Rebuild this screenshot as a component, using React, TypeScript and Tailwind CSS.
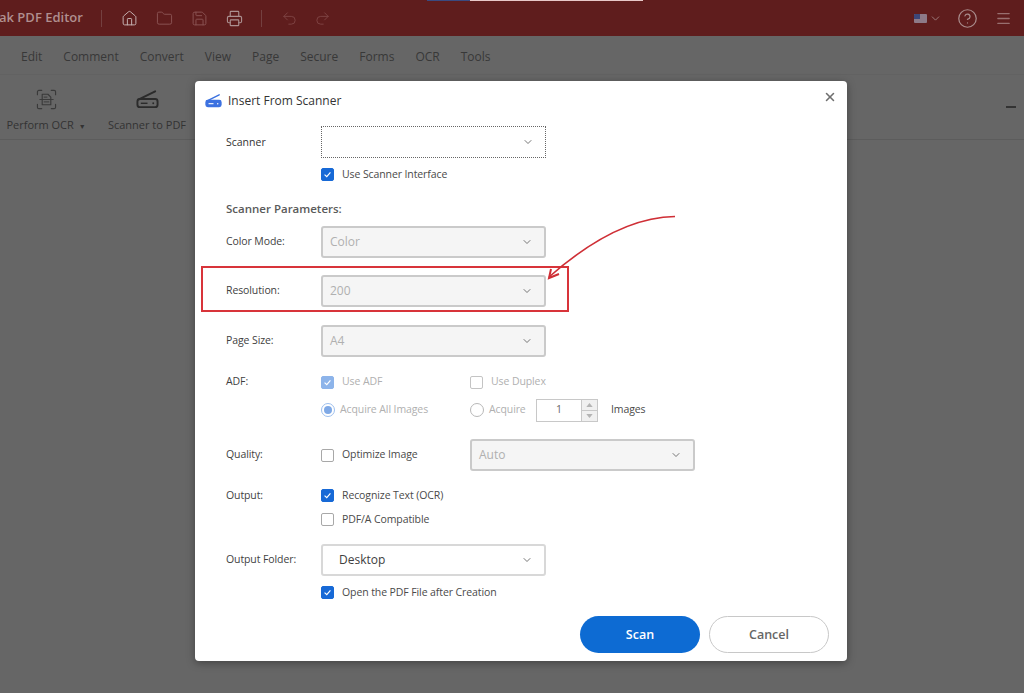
import { ChevronDown, CircleHelp, Folder, Home, Menu, Printer, Redo2, Save, Undo2, X } from 'lucide-react'
import type { ReactNode } from 'react'

const menus = ['Edit', 'Comment', 'Convert', 'View', 'Page', 'Secure', 'Forms', 'OCR', 'Tools']

function ScannerIcon({ color, className }: { color: string; className: string }) {
  return (
    <svg viewBox="0 0 24 20" className={className} fill="none">
      <path d="M3 10.5 L20 2" stroke={color} strokeWidth="2" strokeLinecap="round" />
      <rect x="1.5" y="10" width="21" height="8.5" rx="2.5" stroke={color} strokeWidth="2" fill={color === '#3b71e0' ? color : 'none'} />
      <path d="M5 14.5h7" stroke={color === '#3b71e0' ? '#fff' : color} strokeWidth="1.5" />
      <circle cx="18" cy="14.5" r="1" fill={color === '#3b71e0' ? '#fff' : color} />
    </svg>
  )
}

function OcrIcon() {
  return (
    <svg viewBox="0 0 22 22" className="w-[21px] h-[21px]" fill="none" stroke="#3a3a3a" strokeWidth="1.2" strokeLinecap="round">
      <path d="M1.5 6V3a1.5 1.5 0 0 1 1.5-1.5h3M16 1.5h3A1.5 1.5 0 0 1 20.500 3v3M20.500 16v3a1.500 1.500 0 0 1-1.500 1.500h-3M6 20.500H3A1.500 1.500 0 0 1 1.500 19v-3" />
      <path d="M6.500 5.500h6l3 3v8h-9z" strokeLinejoin="round" />
      <path d="M4 11h14M8.500 8.500h3M8.500 13.500h5" strokeWidth="1" />
    </svg>
  )
}

function Check({ state, children }: { state: 'on' | 'off' | 'on-dim' | 'off-dim'; children: ReactNode }) {
  const box =
    state === 'on'
      ? 'bg-[#1769d6] border-[#1769d6]'
      : state === 'on-dim'
        ? 'bg-[#8db4ea] border-[#8db4ea]'
        : state === 'off'
          ? 'bg-white border-[#a8a8a8]'
          : 'bg-white border-[#c4c4c4]'
  const dim = state === 'on-dim' || state === 'off-dim'
  return (
    <div className="flex items-center">
      <span className={`w-[13px] h-[13px] rounded-[2px] border flex items-center justify-center ${box}`}>
        {(state === 'on' || state === 'on-dim') && (
          <svg viewBox="0 0 12 12" className="w-[11px] h-[11px]" fill="none">
            <path d="M2.8 6.200 5.200 8.400 9.200 3.800" stroke="#fff" strokeWidth="1.3" />
          </svg>
        )}
      </span>
      <span className={`ml-[8px] text-[10.5px] tracking-[-0.1px] ${dim ? 'text-[#b0b0b0]' : 'text-[#4a4a4a]'}`}>{children}</span>
    </div>
  )
}

function Select({ value, width = 'w-[225px]', kind = 'disabled' }: { value?: string; width?: string; kind?: 'disabled' | 'normal' | 'focus' }) {
  const look =
    kind === 'disabled'
      ? 'bg-[#f5f5f5] border-[#cacaca] border-2 rounded-[3px] text-[#b0b0b0] pl-[7px]'
      : kind === 'normal'
        ? 'bg-white border-[#d8d8d8] border-2 rounded-[3px] text-[#404040] pl-[16px]'
        : 'bg-white border border-dotted border-[#666] text-[#404040] pl-[8px]'
  return (
    <div className={`${width} h-[32px] flex items-center justify-between pr-[11px] text-[12px] ${look}`}>
      <span>{value}</span>
      <ChevronDown className="w-[12px] h-[12px] text-[#666]" strokeWidth={1.8} />
    </div>
  )
}

function Label({ children }: { children: ReactNode }) {
  return <span className="w-[95px] shrink-0 text-[10.5px] tracking-[-0.1px] text-[#3f3f3f]">{children}</span>
}

export default function App() {
  return (
    <div className="relative w-[1024px] h-[693px] overflow-hidden bg-[#666666] font-['Open_Sans','Noto_Sans',sans-serif]">
      {/* top strip of the screen recording */}
      <div className="absolute top-0 left-[427px] h-px w-[43px] bg-[#3a4a80]" />
      <div className="absolute top-0 left-[470px] h-px w-[173px] bg-[#e8c8c8]" />

      {/* title bar */}
      <div className="h-[36px] bg-[#5f1d1d] flex items-center">
        <span className="ml-[-1px] w-[85px] text-[13px] font-semibold text-[#b08f8f] whitespace-nowrap">ak PDF Editor</span>
        <span className="ml-[17px] w-px h-[17px] bg-[#744040]" />
        <Home className="ml-[19px] w-[17px] h-[17px] text-[#c4b0b0]" strokeWidth={1.4} />
        <Folder className="ml-[18px] w-[17px] h-[17px] text-[#8a5252]" strokeWidth={1.4} />
        <Save className="ml-[18px] w-[17px] h-[17px] text-[#8a5252]" strokeWidth={1.4} />
        <Printer className="ml-[18px] w-[17px] h-[17px] text-[#ab9090]" strokeWidth={1.6} />
        <span className="ml-[18px] w-px h-[17px] bg-[#744040]" />
        <Undo2 className="ml-[19px] w-[17px] h-[17px] text-[#7d4242]" strokeWidth={1.4} />
        <Redo2 className="ml-[16px] w-[17px] h-[17px] text-[#7d4242]" strokeWidth={1.4} />
        <div className="ml-auto flex items-center mr-[12px]">
          <span className="w-[13px] h-[9px] bg-[#8d7a88] rounded-[1px] overflow-hidden">
            <span className="block w-[6px] h-[5px] bg-[#3c4678]" />
          </span>
          <ChevronDown className="ml-[2px] w-[13px] h-[13px] text-[#a98c8c]" strokeWidth={1.5} />
          <CircleHelp className="ml-[15px] w-[21px] h-[21px] text-[#a98c8c]" strokeWidth={1.4} />
          <Menu className="ml-[17px] w-[17px] h-[17px] text-[#986f6f]" strokeWidth={1.8} />
        </div>
      </div>

      {/* menu row */}
      <div className="h-[39px] pt-[3px] pl-[21px] flex items-center gap-[21px] border-b border-[#626262] text-[12px] text-[#383838]">
        {menus.map(m => (
          <span key={m}>{m}</span>
        ))}
      </div>

      {/* toolbar */}
      <div className="h-[65px] border-b border-[#5c5c5c] flex relative">
        <div className="w-[92px] flex flex-col items-center pt-[14px]">
          <OcrIcon />
          <span className="mt-[7px] text-[11px] text-[#333] whitespace-nowrap">
            Perform OCR <span className="text-[7px] ml-[2px]">▼</span>
          </span>
        </div>
        <div className="w-[110px] flex flex-col items-center pt-[14px]">
          <ScannerIcon color="#2b2b2b" className="w-[23px] h-[20px]" />
          <span className="mt-[8px] text-[11px] text-[#333] whitespace-nowrap">Scanner to PDF</span>
        </div>
        <span className="absolute right-[8px] top-[31px] w-[10px] h-[2px] bg-[#333]" />
      </div>

      {/* dialog */}
      <div className="absolute left-[195px] top-[81px] w-[652px] h-[580px] bg-white rounded-[4px] shadow-[0_2px_8px_rgba(0,0,0,0.35)] pl-[31px]">
        <X className="absolute right-[10px] top-[9px] w-[14px] h-[14px] text-[#6f6f6f]" strokeWidth={2.6} />

        <div className="h-[38px] flex items-center ml-[-21px]">
          <ScannerIcon color="#3b71e0" className="w-[17px] h-[15px]" />
          <span className="ml-[6px] pt-px text-[12px] font-medium text-[#333]">Insert From Scanner</span>
        </div>

        <div className="mt-[7px] flex items-center">
          <span className="w-[95px] pt-px text-[10.5px] font-medium text-[#333]">Scanner</span>
          <Select kind="focus" />
        </div>
        <div className="mt-[9px] ml-[95px]">
          <Check state="on">Use Scanner Interface</Check>
        </div>

        <div className="mt-[17px] text-[11.5px] font-semibold text-[#5a5a5a]">Scanner Parameters:</div>

        <div className="mt-[9px] flex items-center">
          <Label>Color Mode:</Label>
          <Select value="Color" />
        </div>
        <div className="mt-[17px] flex items-center">
          <Label>Resolution:</Label>
          <Select value="200" />
        </div>
        <div className="mt-[18px] flex items-center">
          <Label>Page Size:</Label>
          <Select value="A4" />
        </div>

        <div className="mt-[16px] flex items-center h-[18px]">
          <Label>ADF:</Label>
          <div className="w-[149px]">
            <Check state="on-dim">Use ADF</Check>
          </div>
          <Check state="off-dim">Use Duplex</Check>
        </div>
        <div className="mt-[7px] flex items-center h-[24px]">
          <span className="w-[95px] shrink-0" />
          <div className="w-[149px] flex items-center">
            <span className="w-[14px] h-[14px] rounded-full border border-[#9dbfee] flex items-center justify-center">
              <span className="w-[8px] h-[8px] rounded-full bg-[#7fa9e6]" />
            </span>
            <span className="ml-[5px] text-[10.5px] tracking-[-0.1px] text-[#b0b0b0] whitespace-nowrap">Acquire All Images</span>
          </div>
          <span className="w-[14px] h-[14px] rounded-full border border-[#b8b8b8]" />
          <span className="ml-[5px] w-[47px] text-[10.5px] tracking-[-0.1px] text-[#b0b0b0]">Acquire</span>
          <div className="w-[62px] h-[23px] border border-[#c8c8c8] flex">
            <span className="flex-1 flex items-center justify-center text-[10.5px] text-[#666]">1</span>
            <div className="w-[16px] border-l border-[#c8c8c8] flex flex-col">
              <span className="flex-1 bg-[#f0f0f0] border-b border-[#c8c8c8] flex items-center justify-center">
                <svg viewBox="0 0 8 5" className="w-[7px] h-[4px]"><path d="M4 0 8 5H0z" fill="#b4b4b4" /></svg>
              </span>
              <span className="flex-1 bg-[#f0f0f0] flex items-center justify-center">
                <svg viewBox="0 0 8 5" className="w-[7px] h-[4px]"><path d="M0 0h8L4 5z" fill="#b4b4b4" /></svg>
              </span>
            </div>
          </div>
          <span className="ml-[13px] text-[10.5px] tracking-[-0.1px] text-[#4a4a4a]">Images</span>
        </div>

        <div className="mt-[17px] flex items-center">
          <Label>Quality:</Label>
          <div className="w-[149px]">
            <Check state="off">Optimize Image</Check>
          </div>
          <Select value="Auto" width="w-[225px]" />
        </div>

        <div className="mt-[17px] flex items-center">
          <Label>Output:</Label>
          <Check state="on">Recognize Text (OCR)</Check>
        </div>
        <div className="mt-[8px] ml-[95px]">
          <Check state="off">PDF/A Compatible</Check>
        </div>

        <div className="mt-[16px] flex items-center">
          <Label>Output Folder:</Label>
          <Select value="Desktop" kind="normal" />
        </div>
        <div className="mt-[9px] ml-[95px]">
          <Check state="on">Open the PDF File after Creation</Check>
        </div>

        <div className="mt-[16px] mr-[18px] flex justify-end gap-[9px]">
          <button className="w-[120px] h-[37px] pt-[2px] rounded-full bg-[#0d6bd3] text-white text-[12.5px] font-semibold">Scan</button>
          <button className="w-[120px] h-[37px] pt-[2px] rounded-full border border-[#c8c8c8] bg-white text-[#666] text-[12.5px] font-semibold">Cancel</button>
        </div>
      </div>

      {/* red annotation over the dialog */}
      <div className="absolute left-[201px] top-[266px] w-[368px] h-[46px] border-2 border-[#d8343a]" />
      <svg className="absolute left-[540px] top-[210px] w-[140px] h-[75px]" viewBox="0 0 140 75" fill="none">
        <path d="M135 6.500C100 7 60 22 9 67" stroke="#cf2f36" strokeWidth="1.6" />
        <path d="M19 64 9 68 11 59" stroke="#cf2f36" strokeWidth="2" />
      </svg>
    </div>
  )
}
